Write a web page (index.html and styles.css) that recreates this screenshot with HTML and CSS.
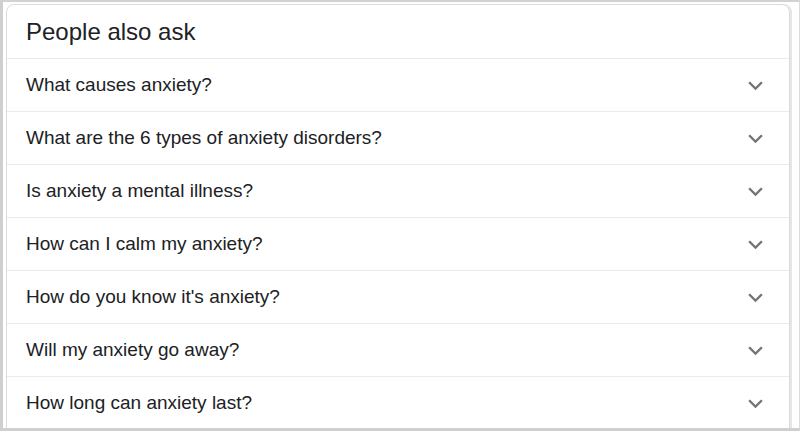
FILE: index.html
```html
<!DOCTYPE html>
<html>
<head>
<meta charset="utf-8">
<link rel="stylesheet" href="styles.css">
</head>
<body>
<div class="frame">
  <div class="card">
    <div class="header">People also ask</div>
    <div class="row"><span>What causes anxiety?</span><svg class="chev" viewBox="0 0 24 24"><path d="M16.59 8.59L12 13.17 7.41 8.59 6 10l6 6 6-6z"/></svg></div>
    <div class="row"><span>What are the 6 types of anxiety disorders?</span><svg class="chev" viewBox="0 0 24 24"><path d="M16.59 8.59L12 13.17 7.41 8.59 6 10l6 6 6-6z"/></svg></div>
    <div class="row"><span>Is anxiety a mental illness?</span><svg class="chev" viewBox="0 0 24 24"><path d="M16.59 8.59L12 13.17 7.41 8.59 6 10l6 6 6-6z"/></svg></div>
    <div class="row"><span>How can I calm my anxiety?</span><svg class="chev" viewBox="0 0 24 24"><path d="M16.59 8.59L12 13.17 7.41 8.59 6 10l6 6 6-6z"/></svg></div>
    <div class="row"><span>How do you know it's anxiety?</span><svg class="chev" viewBox="0 0 24 24"><path d="M16.59 8.59L12 13.17 7.41 8.59 6 10l6 6 6-6z"/></svg></div>
    <div class="row"><span>Will my anxiety go away?</span><svg class="chev" viewBox="0 0 24 24"><path d="M16.59 8.59L12 13.17 7.41 8.59 6 10l6 6 6-6z"/></svg></div>
    <div class="row"><span>How long can anxiety last?</span><svg class="chev" viewBox="0 0 24 24"><path d="M16.59 8.59L12 13.17 7.41 8.59 6 10l6 6 6-6z"/></svg></div>
  </div>
</div>
</body>
</html>
```
FILE: styles.css
```css
html, body {
  margin: 0;
  padding: 0;
  background: #fff;
}
body {
  font-family: "Liberation Sans", Arial, sans-serif;
  color: #202124;
}
.frame {
  width: 800px;
  height: 431px;
  box-sizing: border-box;
  border-top: 2px solid #d2d2d2;
  border-left: 3px solid #cfcfcf;
  border-right: 1px solid #dcdcdc;
  border-bottom: 3px solid #cfcfcf;
  padding: 2px 0 0 3px;
  overflow: hidden;
}
.card {
  width: 784px;
  box-sizing: border-box;
  border: 1px solid #dadce0;
  border-radius: 8px;
  box-shadow: 2px 0 0 #e6e6e6;
  height: 440px;
}
.header {
  height: 53px;
  display: flex;
  align-items: center;
  padding-left: 19px;
  font-size: 24px;
  line-height: 28px;
  padding-top: 1px;
  box-sizing: border-box;
}
.row {
  height: 53px;
  box-sizing: border-box;
  border-top: 1px solid #ebebeb;
  display: flex;
  align-items: center;
  justify-content: space-between;
  padding: 0 19px 0 19px;
  font-size: 19px;
  line-height: 22px;
}
.chev {
  width: 29px;
  height: 29px;
  fill: #70757a;
}
```
